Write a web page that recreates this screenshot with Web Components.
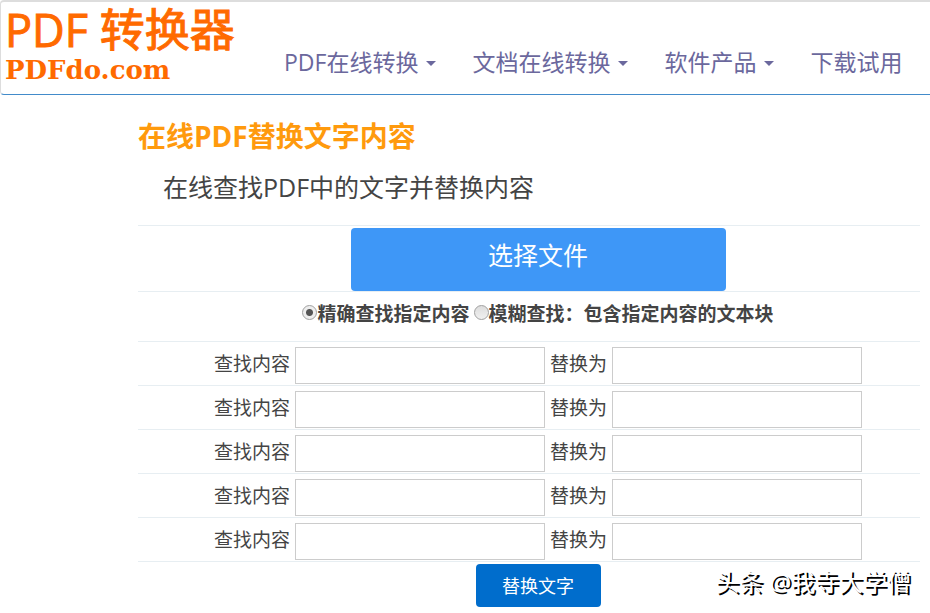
<!DOCTYPE html>
<html lang="zh-CN">
<head>
<meta charset="utf-8">
<title>在线PDF替换文字内容</title>
<style>
  body { margin: 0; background: #fff; color: #444; font-family: "Open Sans", "Noto Sans CJK SC", sans-serif; }
</style>
</head>
<body>
<pdf-page></pdf-page>
<script>
const define = (name, html) => customElements.define(name, class extends HTMLElement {
  constructor() {
    super();
    const t = document.createElement('template');
    t.innerHTML = html;
    this.attachShadow({ mode: 'open' }).append(t.content.cloneNode(true));
  }
});

define('pdf-logo', `
<style>
  :host { display: block; flex: none; color: #ff6a00; white-space: nowrap; }
  a { display: block; color: inherit; text-decoration: none; }
  .top { display: block; font-size: 45px; line-height: 50px; -webkit-text-stroke: 1px currentColor; }
  .sub { display: block; padding-top: 3px; font: bold 26px/24px "DejaVu Serif", serif; }
</style>
<a href="#"><span class="top">PDF 转换器</span><span class="sub">PDFdo.com</span></a>`);

define('nav-item', `
<style>
  :host { display: block; flex: none; }
  a { display: flex; align-items: center; gap: 8px; color: #6b689d; text-decoration: none; font-size: 23px; line-height: 32px; white-space: nowrap; }
  i { display: none; border: 5px solid transparent; border-top-color: currentColor; border-bottom: 0; margin-top: 2px; }
  :host([menu]) i { display: block; }
</style>
<a href="#"><slot></slot><i></i></a>`);

define('site-header', `
<style>
  :host { display: flex; align-items: flex-start; gap: 47px; height: 95px; box-sizing: border-box; padding: 3px 0 0 4px;
    border: 1px solid #ddd; border-top-width: 2px; border-right: 0; border-bottom-color: #428bca; border-radius: 4px 0 0 4px; }
  pdf-logo { width: 232px; }
  nav { display: flex; gap: 36px; padding-top: 41px; }
</style>
<pdf-logo></pdf-logo>
<nav>
  <nav-item menu>PDF在线转换</nav-item>
  <nav-item menu>文档在线转换</nav-item>
  <nav-item menu>软件产品</nav-item>
  <nav-item>下载试用</nav-item>
</nav>`);

define('form-row', `
<style>
  :host { display: flex; justify-content: center; padding-left: 18px; border-top: 1px solid #e7eef2; }
</style>
<slot></slot>`);

define('push-button', `
<style>
  :host { display: block; }
  button { display: block; width: 125px; height: 43px; padding: 0; border: 0; border-radius: 4px; background: #006dcc;
    color: #fff; font: inherit; font-size: 18px; line-height: 26px; cursor: pointer; }
  :host([large]) button { width: 375px; height: 63px; padding-bottom: 9px; background: #3e97f7; font-size: 25px; line-height: 36px; }
</style>
<button type="button"><slot></slot></button>`);

define('match-mode', `
<style>
  :host { display: flex; gap: 4px; height: 49px; padding-top: 8px; box-sizing: border-box; font-size: 19px; line-height: 28px; font-weight: bold; white-space: nowrap; }
  label { display: flex; }
  input { appearance: none; width: 15px; height: 15px; box-sizing: border-box; margin: 5px 0 0; border: 1px solid #a0a0a0; border-radius: 50%;
    background: linear-gradient(#ddd, #f0f0f0); }
  input:checked { background: radial-gradient(circle, #555 3px, #eee 4px); }
</style>
<label><input type="radio" name="mode" checked>精确查找指定内容</label>
<label><input type="radio" name="mode">模糊查找：包含指定内容的文本块</label>`);

define('replace-pair', `
<style>
  :host { display: flex; gap: 5px; padding: 5px 0 1px; font-size: 19px; line-height: 34px; white-space: nowrap; }
  input { width: 250px; height: 37px; box-sizing: border-box; padding: 4px 6px; border: 1px solid #ccc; background: #fff; font: inherit; line-height: 27px; color: inherit; }
</style>
<label for="find">查找内容</label><input id="find" type="text">
<label for="with">替换为</label><input id="with" type="text">`);

define('water-mark', `
<style>
  :host { position: absolute; right: 19px; bottom: 13px; font-size: 24px; line-height: 36px; color: #fff; text-shadow: 2px 2px 0 #000; white-space: nowrap; }
</style>
<slot></slot>`);

define('pdf-page', `
<style>
  :host { display: block; position: relative; min-height: 100vh; }
  main { padding: 22px 10px 0 138px; }
  h1 { margin: 0; font-size: 28px; line-height: 38px; font-weight: bold; color: #ff9a0d; }
  p { margin: 0; padding: 14px 25px 20px; font-size: 25px; line-height: 36px; }
  push-button { margin-top: 2px; }
</style>
<site-header></site-header>
<main>
  <h1>在线PDF替换文字内容</h1>
  <p>在线查找PDF中的文字并替换内容</p>
  <form-row><push-button large>选择文件</push-button></form-row>
  <form-row><match-mode></match-mode></form-row>
  <form-row><replace-pair></replace-pair></form-row>
  <form-row><replace-pair></replace-pair></form-row>
  <form-row><replace-pair></replace-pair></form-row>
  <form-row><replace-pair></replace-pair></form-row>
  <form-row><replace-pair></replace-pair></form-row>
  <form-row><push-button>替换文字</push-button></form-row>
</main>
<water-mark>头条 @我寺大学僧</water-mark>`);
</script>
</body>
</html>
